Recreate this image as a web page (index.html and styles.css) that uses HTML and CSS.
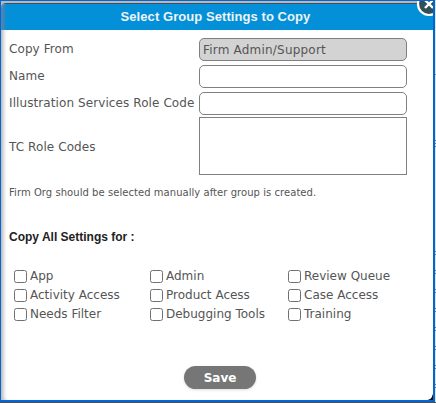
FILE: index.html
```html
<!DOCTYPE html>
<html lang="en">
<head>
<meta charset="utf-8">
<title>Select Group Settings to Copy</title>
<link rel="stylesheet" href="styles.css">
</head>
<body>
<main class="frame">
  <section class="dialog">
    <h1 class="title">Select Group Settings to Copy</h1>
    <form class="body">
      <div class="row"><label for="from">Copy From</label><input id="from" class="field locked" value="Firm Admin/Support" readonly></div>
      <div class="row"><label for="name">Name</label><input id="name" class="field"></div>
      <div class="row"><label for="role">Illustration Services Role Code</label><input id="role" class="field"></div>
      <div class="row tall"><label for="codes">TC Role Codes</label><textarea id="codes" class="area"></textarea></div>
      <p class="note">Firm Org should be selected manually after group is created.</p>
      <h2 class="subtitle">Copy All Settings for :</h2>
      <div class="options">
        <label class="option"><input type="checkbox"><span>App</span></label>
        <label class="option"><input type="checkbox"><span>Admin</span></label>
        <label class="option"><input type="checkbox"><span>Review Queue</span></label>
        <label class="option"><input type="checkbox"><span>Activity Access</span></label>
        <label class="option"><input type="checkbox"><span>Product Acess</span></label>
        <label class="option"><input type="checkbox"><span>Case Access</span></label>
        <label class="option"><input type="checkbox"><span>Needs Filter</span></label>
        <label class="option"><input type="checkbox"><span>Debugging Tools</span></label>
        <label class="option"><input type="checkbox"><span>Training</span></label>
      </div>
      <button class="save" type="button">Save</button>
    </form>
  </section>
  <svg class="close" width="26" height="26" viewBox="0 0 26 26">
    <circle cx="13" cy="13" r="11" fill="#2f4f5b" stroke="#fff" stroke-width="2.2"/>
    <path d="M9 9l8 8M17 9l-8 8" stroke="#fff" stroke-width="2.4"/>
  </svg>
</main>
<div class="marks"></div>
</body>
</html>
```
FILE: styles.css
```css
* { box-sizing: border-box; }
body {
  margin: 0;
  width: 436px;
  height: 403px;
  overflow: hidden;
  position: relative;
  background: linear-gradient(#e3e3e3, #e3e3e3) right top / 1px 402px no-repeat #4b4f55;
  font: 12px "DejaVu Sans", sans-serif;
  color: #555;
}
.frame {
  position: relative;
  width: 435px;
  height: 402px;
  border: solid #0067d5;
  border-width: 1px 2px 2px 1px;
  padding-top: 2px;
  background: #b5b8bc;
  overflow: hidden;
}
.dialog {
  height: 397px;
  background: #fff;
  border-top: 1px solid #444f57;
  border-radius: 5px 0 5px 2px;
  box-shadow: inset 5px 0 4px -3px #aaa;
  overflow: hidden;
}
.frame::after {
  content: "";
  position: absolute;
  right: 0;
  bottom: 0;
  width: 5px;
  height: 7px;
  background: radial-gradient(ellipse 5px 7px at 0 0, transparent 90%, #111 100%);
}
.title {
  margin: 0;
  height: 26px;
  background: linear-gradient(90deg, #4888b9 0, #4284b5 3px, #0390d9 5px);
  color: #eef3f6;
  font: bold 13px/25px "Liberation Sans", sans-serif;
  text-align: center;
  padding-right: 3px;
  letter-spacing: 0.07px;
}
.body {
  padding: 8px 26px 0 8px;
  display: flex;
  flex-direction: column;
}
.row {
  display: flex;
  justify-content: space-between;
  height: 27px;
  line-height: 22px;
}
.row label { white-space: nowrap; letter-spacing: 0.09px; }
.field, .area {
  width: 208px;
  height: 23px;
  margin: 0;
  border: 1px solid #808080;
  border-radius: 5px;
  padding: 0 3px;
  background: #fff;
  color: #555;
  font: inherit;
  letter-spacing: 0.2px;
  outline: 0;
}
.locked { background: #d3d3d3; }
.row.tall { height: 58px; margin-top: -2px; line-height: 60px; }
.area { height: 58px; border-radius: 0; resize: none; }
.note {
  margin: 10px 0 0;
  font-size: 10px;
  line-height: 16px;
  letter-spacing: 0.05px;
  white-space: nowrap;
}
.subtitle {
  margin: 28px 0 0;
  color: #222;
  font: bold 12px/16px "Liberation Sans", sans-serif;
}
.options {
  display: grid;
  grid-template-columns: 136px 138px 120px;
  grid-auto-rows: 19px;
  margin: 22px 0 0 5px;
}
.option {
  display: flex;
  align-items: flex-start;
  gap: 3px;
  line-height: 18px;
  white-space: nowrap;
}
.option input {
  appearance: none;
  flex: none;
  width: 13px;
  height: 13px;
  margin: 3px 0 0;
  border: 1px solid #707070;
  border-radius: 2.5px;
  background: #fff;
}
.save {
  width: 72px;
  height: 23px;
  margin: 42px 0 0 175px;
  border: 0;
  border-radius: 12px;
  background: #767676;
  color: #fff;
  font: bold 12px/22px "DejaVu Sans", sans-serif;
  box-shadow: 0 1px 3px #ddd;
  padding: 0;
}
.close {
  position: absolute;
  left: 415px;
  top: -10px;
}
.marks {
  position: absolute;
  right: 0;
  top: 74px;
  width: 1px;
  height: 320px;
  background:
    linear-gradient(#888, #888) 0 0 / 1px 1px no-repeat,
    repeating-linear-gradient(#777 0 1px, transparent 1px 3px) 0 66px / 1px 7px no-repeat,
    repeating-linear-gradient(#777 0 1px, transparent 1px 3px, #777 3px 4px, transparent 4px 19px) 0 177px / 1px 143px no-repeat;
}
```
